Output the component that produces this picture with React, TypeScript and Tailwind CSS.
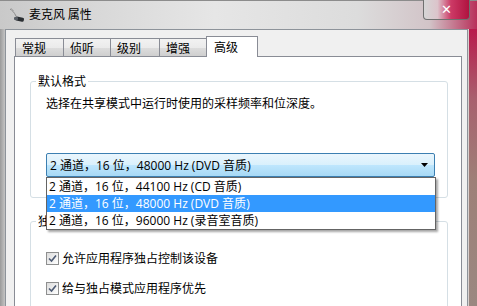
import React from 'react';

const tabs = [
  { label: '常规', w: 'w-[49px]' },
  { label: '侦听', w: 'w-[48px]' },
  { label: '级别', w: 'w-[50px]' },
  { label: '增强', w: 'w-[48px]' },
];

const formats = [
  '2 通道，16 位，44100 Hz (CD 音质)',
  '2 通道，16 位，48000 Hz (DVD 音质)',
  '2 通道，16 位，96000 Hz (录音室音质)',
];

// latin runs in the format strings use a wider latin face, like YaHei's latin glyphs
const FormatText = ({ text }: { text: string }) => (
  <>
    {text.split(/([\u3000-\u9fff\uff00-\uffef]+)/).map((part, i) =>
      i % 2 === 1 ? (
        <span key={i}>{part}</span>
      ) : (
        <span key={i} className="font-['Open_Sans',sans-serif]">
          {part}
        </span>
      )
    )}
  </>
);

const MicIcon = () => (
  <svg width="18" height="18" viewBox="0 0 18 18">
    <path d="M2 3 C4 4 6 6 8 10" stroke="#8a8a8a" strokeWidth="1" fill="none" />
    <path d="M3 2 L6 5" stroke="#b0b0b0" strokeWidth="1" />
    <rect x="7" y="11" width="9" height="4" rx="1.5" fill="#2b2f33" transform="rotate(12 11 13)" />
    <rect x="6" y="11" width="4" height="3" rx="1" fill="#5a5f66" />
  </svg>
);

const CheckBox = ({ label }: { label: string }) => (
  <div className="flex items-center h-[16px]">
    <div className="w-[13px] h-[13px] border border-[#8e8f8f] bg-[linear-gradient(135deg,#dcdcdc,#ffffff)] flex items-center justify-center">
      <svg width="9" height="9" viewBox="0 0 9 9">
        <path d="M1 4.5 L3.5 7 L8 1.5" stroke="#4d5a73" strokeWidth="1.6" fill="none" />
      </svg>
    </div>
    <span className="ml-[3px] text-[12px] leading-[16px] text-black">{label}</span>
  </div>
);

export default function App() {
  return (
    <div className="w-[477px] h-[306px] overflow-hidden flex flex-col bg-[#c8c8c8] font-['Noto_Sans_CJK_SC','Microsoft_YaHei',sans-serif] select-none">
      {/* title bar */}
      <div className="h-[29px] flex items-start shrink-0 border-t border-[#8c8c8c] bg-[linear-gradient(to_right,#c9c9c9_0%,#d8d8d8_20%,#e6e6e6_45%,#dcdcdc_75%,#d2c4c8_90%,#b8305a_100%)]">
        <div className="h-full flex items-center pl-[8px]">
          <MicIcon />
          <span className="ml-[3px] text-[12px] leading-[16px] text-black mb-[3px]">麦克风 属性</span>
        </div>
        <div className="ml-auto mr-[7px] -mt-px w-[47px] h-[20px] rounded-b-[4px] border border-[#707070] border-t-0 bg-[linear-gradient(to_right,#d6d6d6_0%,#dcc4cb_30%,#cc3a66_60%,#b0123f_100%)] flex items-center justify-center">
          <span className="text-white text-[13px] font-bold leading-none font-['DejaVu_Sans',sans-serif]">✕</span>
        </div>
      </div>

      {/* body */}
      <div className="flex-1 flex min-h-0">
        <div className="w-[5px] bg-[linear-gradient(to_right,#9a9a9a,#c4c4c4)]" />
        <div className="flex-1 flex flex-col bg-[#f0f0f0] border-l border-t border-r border-[#8d939a] min-w-0">
          {/* tabs */}
          <div className="flex items-end h-[21px] mt-[6px] pl-[9px] -mb-px relative z-10">
            {tabs.map((t) => (
              <div
                key={t.label}
                className={`${t.w} h-[18px] mb-px border border-b-0 border-[#898c95] -mr-px bg-[linear-gradient(to_bottom,#f2f2f2_0%,#ebebeb_50%,#dddddd_51%,#cfcfcf_100%)] flex items-center pl-[6px]`}
              >
                <span className="text-[12px] leading-[16px] text-black">{t.label}</span>
              </div>
            ))}
            <div className="w-[52px] h-[21px] border border-b-0 border-[#898c95] bg-white flex items-center pl-[7px] pb-[1px]">
              <span className="text-[12px] leading-[16px] text-black">高级</span>
            </div>
          </div>

          {/* tab panel */}
          <div className="flex-1 ml-[8px] mr-[5px] border border-[#898c95] bg-white pt-[24px] pl-[15px] pr-[13px]">
            {/* group 1 */}
            <div className="relative border border-[#d5dfe5] rounded-[3px] pt-[13px] pl-[15px] pr-[11px] pb-[20px]">
              <span className="absolute -top-[9px] left-[5px] px-[2px] bg-white text-[12px] leading-[16px] text-black">默认格式</span>
              <div className="text-[12px] leading-[16px] text-black">选择在共享模式中运行时使用的采样频率和位深度。</div>
              <div className="relative mt-[42px] w-[389px]">
                <div className="h-[24px] border border-[#3c7fb1] rounded-[2px] bg-[linear-gradient(to_bottom,#eaf6fd_0%,#d9f0fc_50%,#bee6fd_51%,#a7d9f5_100%)] flex items-center pl-[3px] pr-[6px]">
                  <span className="flex-1 text-[12px] leading-[16px] text-black whitespace-nowrap">
                    <FormatText text={formats[1]} />
                  </span>
                  <svg width="7" height="4" viewBox="0 0 7 4">
                    <path d="M0 0 H7 L3.5 4 Z" fill="#000" />
                  </svg>
                </div>
                {/* open list */}
                <div className="absolute top-full left-0 w-[390px] border border-[#646464] bg-white shadow-[2px_2px_2px_rgba(0,0,0,0.35)] z-20">
                  {formats.map((f, i) => (
                    <div
                      key={f}
                      className={`h-[17px] flex items-center pl-[2px] text-[12px] leading-[16px] whitespace-nowrap ${i === 1 ? 'bg-[#3399ff] text-white' : 'text-black'}`}
                    >
                      <span>
                        <FormatText text={f} />
                      </span>
                    </div>
                  ))}
                </div>
              </div>
            </div>

            {/* group 2 */}
            <div className="relative mt-[23px] border border-[#d5dfe5] rounded-[3px] pt-[28px] pl-[15px] pb-[20px] flex flex-col gap-[14px]">
              <span className="absolute -top-[9px] left-[5px] px-[2px] bg-white text-[12px] leading-[16px] text-black">独占模式</span>
              <CheckBox label="允许应用程序独占控制该设备" />
              <CheckBox label="给与独占模式应用程序优先" />
            </div>
          </div>
        </div>
        <div className="w-[9px] bg-[linear-gradient(to_bottom,#b81a4c_0%,#a8606e_25%,#9e8078_55%,#9a8881_100%)] border-l border-[#d8d0ce]" />
      </div>
    </div>
  );
}
